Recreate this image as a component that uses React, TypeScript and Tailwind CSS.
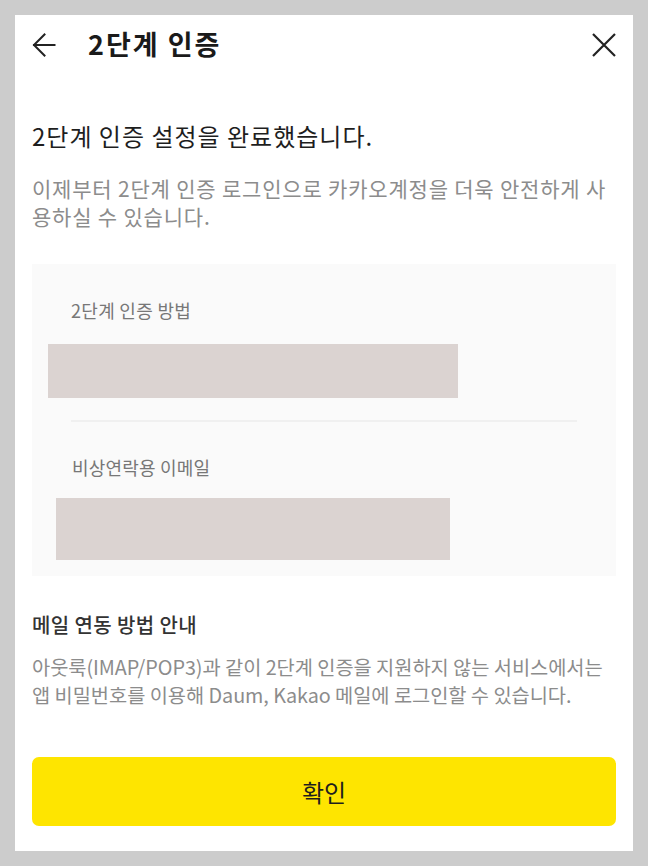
const font = { fontFamily: '"Noto Sans CJK KR", "Noto Sans", sans-serif' };

function BackIcon() {
  return (
    <svg width="24" height="24" viewBox="0 0 24 24" fill="none" stroke="#222" strokeWidth="2" strokeLinecap="square">
      <path d="M22.5 12H2" />
      <path d="M12.5 1.5 2 12l10.5 10.5" />
    </svg>
  );
}

function CloseIcon() {
  return (
    <svg width="24" height="24" viewBox="0 0 24 24" fill="none" stroke="#222" strokeWidth="2.2">
      <path d="M1 1l22 22M23 1 1 23" />
    </svg>
  );
}

function InfoRow({ label, first }: { label: string; first?: boolean }) {
  return (
    <div className={first ? 'h-[156px] pt-[34px]' : 'h-[154px] pt-[33px]'}>
      <p
        className={
          first
            ? 'pl-[39px] text-[18px] leading-6 tracking-[0.3px] text-[#777]'
            : 'pl-[40px] text-[18px] leading-6 tracking-[0.2px] text-[#777]'
        }
      >
        {label}
      </p>
      <div
        className={
          first
            ? 'mt-[22px] ml-[16px] h-[54px] w-[410px] bg-[#dbd3d1]'
            : 'mt-[19px] ml-[24px] h-[62px] w-[394px] bg-[#dbd3d1]'
        }
      />
    </div>
  );
}

export default function App() {
  return (
    <div className="min-h-screen bg-[#cccccc] p-[15px]" style={font}>
      <div className="h-[836px] bg-white px-[17px]">
        <header className="flex h-[59px] items-center justify-between">
          <div className="flex items-center gap-[32px]">
            <BackIcon />
            <h1 className="text-[27px] font-bold tracking-[2px] text-[#1a1a1a]">2단계 인증</h1>
          </div>
          <CloseIcon />
        </header>

        <h2 className="mt-[46px] text-[24px] leading-8 tracking-[1px] text-[#1e1e1e]">2단계 인증 설정을 완료했습니다.</h2>
        <p className="mt-[22px] text-[21px] leading-[28px] tracking-[0.8px] text-[#8c8c8c]">
          이제부터 2단계 인증 로그인으로 카카오계정을 더욱 안전하게 사용하실 수 있습니다.
        </p>

        <div className="mt-[34px] bg-[#fafafa]">
          <InfoRow label="2단계 인증 방법" first />
          <div className="mx-[39px] h-[2px] bg-[#f0f0f0]" />
          <InfoRow label="비상연락용 이메일" />
        </div>

        <h3 className="mt-[35px] text-[20px] font-medium leading-7 tracking-[0.4px] text-[#333]">메일 연동 방법 안내</h3>
        <p className="mt-[14px] text-[19.8px] leading-[28px] tracking-[-0.05px] text-[#8c8c8c]">
          아웃룩(IMAP/POP3)과 같이 2단계 인증을 지원하지 않는 서비스에서는 앱 비밀번호를 이용해 Daum, Kakao 메일에 로그인할 수 있습니다.
        </p>

        <button className="mt-[48px] flex h-[69px] w-full items-center justify-center rounded-[7px] bg-[#fee500] text-[24px] text-[#1e1e1e]">
          확인
        </button>
      </div>
    </div>
  );
}
